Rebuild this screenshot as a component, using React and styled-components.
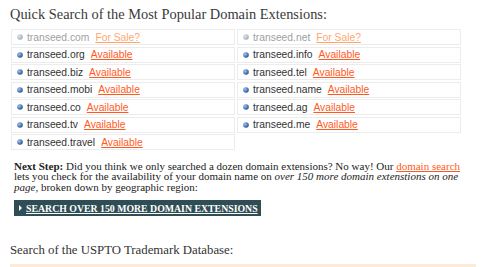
import styled, { createGlobalStyle } from "styled-components";

const GlobalStyle = createGlobalStyle`
	body {
		margin: 0;
		background: #fff;
	}
`;

const domains = [
	{ name: "transeed.com", status: "For Sale?" },
	{ name: "transeed.net", status: "For Sale?" },
	{ name: "transeed.org", status: "Available" },
	{ name: "transeed.info", status: "Available" },
	{ name: "transeed.biz", status: "Available" },
	{ name: "transeed.tel", status: "Available" },
	{ name: "transeed.mobi", status: "Available" },
	{ name: "transeed.name", status: "Available" },
	{ name: "transeed.co", status: "Available" },
	{ name: "transeed.ag", status: "Available" },
	{ name: "transeed.tv", status: "Available" },
	{ name: "transeed.me", status: "Available" },
	{ name: "transeed.travel", status: "Available" },
];

const Bullet = ({ muted }) => (
	<svg width="6" height="6" viewBox="0 0 6 6">
		<defs>
			<radialGradient id={muted ? "bm" : "ba"} cx="35%" cy="35%" r="70%">
				<stop offset="0" stopColor={muted ? "#dfe6ee" : "#9fc3ec"} />
				<stop offset="1" stopColor={muted ? "#9aa8b8" : "#1f4f95"} />
			</radialGradient>
		</defs>
		<circle cx="3" cy="3" r="2.8" fill={`url(#${muted ? "bm" : "ba"})`} />
	</svg>
);

const App = () => {
	return (
		<Page>
			<GlobalStyle />
			<Heading>Quick Search of the Most Popular Domain Extensions:</Heading>
			<DomainGrid>
				{domains.map((d) => {
					const forSale = d.status === "For Sale?";
					return (
						<Cell key={d.name}>
							<Bullet muted={forSale} />
							<DomainName $muted={forSale}>{d.name}</DomainName>
							<Status href="#" $muted={forSale}>
								{d.status}
							</Status>
						</Cell>
					);
				})}
			</DomainGrid>
			<NextStep>
				<strong>Next Step:</strong> Did you think we only searched a dozen domain
				extensions? No way! Our <InlineLink href="#">domain search</InlineLink>{" "}
				lets you check for the availability of your domain name on{" "}
				<em>over 150 more domain extenstions on one page</em>, broken down by
				geographic region:
			</NextStep>
			<SearchButton href="#">
				<Arrow />
				<span>SEARCH OVER 150 MORE DOMAIN EXTENSIONS</span>
			</SearchButton>
			<SubHeading>Search of the USPTO Trademark Database:</SubHeading>
			<PeachBar />
		</Page>
	);
};

export default App;

const Page = styled.div`
	padding: 6px 5px 0 10px;
	font-family: "Liberation Serif", "Times New Roman", serif;
	color: #333;
`;

const Heading = styled.h2`
	margin: 0 0 7px;
	font-size: 14.4px;
	font-weight: normal;
	line-height: 16px;
	color: #3a3a3a;
`;

const DomainGrid = styled.div`
	display: grid;
	grid-template-columns: 224px 224px;
	column-gap: 2px;
	row-gap: 1.5px;
	margin-left: 1px;
`;

const Cell = styled.div`
	display: flex;
	align-items: center;
	gap: 4px;
	height: 14px;
	padding: 0 0 0 5px;
	border: 1px solid #ececec;
	font-family: "Liberation Sans", Arial, sans-serif;
	font-size: 10.3px;

	svg {
		flex: none;
	}
`;

const DomainName = styled.span`
	color: ${(p) => (p.$muted ? "#a0a0a0" : "#333")};
	margin-right: 2px;
`;

const Status = styled.a`
	color: ${(p) => (p.$muted ? "#ffa66e" : "#ff5a1e")};
	text-decoration: underline;
`;

const NextStep = styled.p`
	margin: 11px 0 0 4px;
	max-width: 450px;
	font-size: 11px;
	line-height: 10.3px;
	color: #222;

	strong {
		font-weight: bold;
	}
`;

const InlineLink = styled.a`
	color: #ff5a1e;
	text-decoration: underline;
`;

const SearchButton = styled.a`
	display: inline-flex;
	align-items: center;
	gap: 4px;
	margin: 8px 0 0 4px;
	padding: 1px 3px 0 5px;
	background: #2f4d55;
	color: #fff;
	font-size: 9.8px;
	font-weight: bold;
	line-height: 15px;
	text-decoration: underline;
`;

const Arrow = styled.span`
	width: 0;
	height: 0;
	border-top: 3px solid transparent;
	border-bottom: 3px solid transparent;
	border-left: 3px solid #fff;
`;

const SubHeading = styled.h3`
	margin: 26px 0 0;
	font-size: 12.8px;
	font-weight: normal;
	line-height: 16px;
	color: #333;
`;

const PeachBar = styled.div`
	height: 10px;
	margin-top: 6px;
	width: 466px;
	background: #fdebd9;
`;
